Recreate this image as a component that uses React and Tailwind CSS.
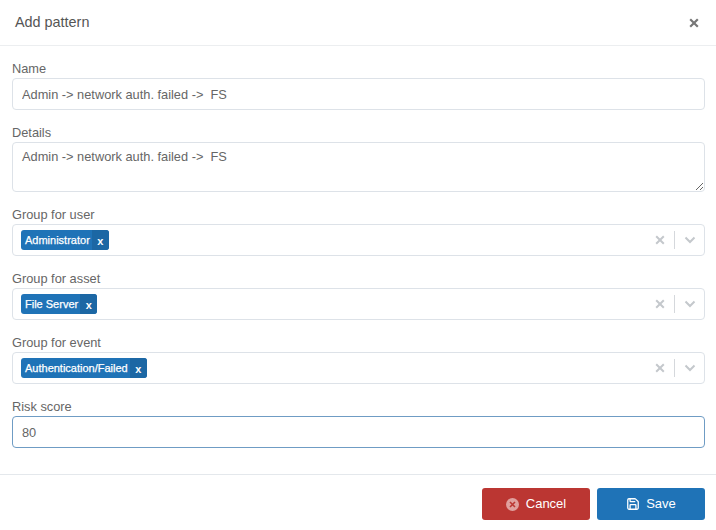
import React from "react";
import { Save } from "lucide-react";

const font = "font-['Liberation_Sans',Arial,sans-serif]";

function Field({ label, children }) {
  return (
    <div className="flex flex-col">
      <label className="h-[18px] text-[12.8px] leading-[18px] text-[#666]">{label}</label>
      {children}
    </div>
  );
}

function TagSelect({ label, tag }) {
  return (
    <Field label={label}>
      <div className="flex h-8 items-center rounded-[4px] border border-[#dde2e8] bg-white pl-2">
        <div className="flex h-5 items-stretch overflow-hidden rounded-[3px] bg-[#1f73b7] text-[11px] text-white">
          <span className="flex items-center pl-[4px] pr-[2px] [-webkit-text-stroke:0.25px_white]">{tag}</span>
          <span className="flex w-[17px] items-center justify-center bg-[#1c67a4] pt-[2px] text-[11px] font-bold">x</span>
        </div>
        <div className="ml-auto flex items-center">
          <svg width="10" height="10" viewBox="0 0 10 10" className="mr-[9px]">
            <path d="M1.2 1.2 L8.8 8.8 M8.8 1.2 L1.2 8.8" stroke="#c4c8cc" strokeWidth="2" fill="none" />
          </svg>
          <div className="h-[18px] w-px bg-[#d5d8dc]" />
          <svg width="12" height="8" viewBox="0 0 12 8" className="ml-[9px] mr-[8px]">
            <path d="M1.5 1.5 L6 6 L10.5 1.5" stroke="#c4c8cc" strokeWidth="2" fill="none" />
          </svg>
        </div>
      </div>
    </Field>
  );
}

export default function App() {
  const text = "Admin -> network auth. failed ->  FS";
  return (
    <div className={`h-[530px] w-[716px] overflow-hidden bg-white ${font}`}>
      <header className="flex h-[46px] items-center justify-between border-b border-[#eceef0] pl-[15px] pr-[17px]">
        <h2 className="text-[14.4px] text-[#555]">Add pattern</h2>
        <svg width="10" height="10" viewBox="0 0 10 10">
          <path d="M1.2 1.2 L8.8 8.8 M8.8 1.2 L1.2 8.8" stroke="#777" strokeWidth="2.2" fill="none" />
        </svg>
      </header>

      <div className="flex h-[429px] flex-col gap-[14px] border-b border-[#e4e8ec] pl-3 pr-[11px] pt-[14px]">
        <Field label="Name">
          <input
            readOnly
            value={text}
            className="h-8 rounded-[4px] border border-[#dde2e8] px-[9px] text-[12.8px] whitespace-pre text-[#666] outline-none"
          />
        </Field>
        <Field label="Details">
          <textarea
            readOnly
            value={text}
            className="block h-[50px] rounded-[4px] border border-[#dde2e8] px-[9px] py-[5px] text-[12.8px] leading-[18px] text-[#666] outline-none"
          />
        </Field>
        <TagSelect label="Group for user" tag="Administrator" />
        <TagSelect label="Group for asset" tag="File Server" />
        <TagSelect label="Group for event" tag="Authentication/Failed" />
        <Field label="Risk score">
          <input
            readOnly
            value="80"
            className="h-8 rounded-[4px] border border-[#6f9cc4] px-[9px] text-[12.8px] text-[#666] outline-none"
          />
        </Field>
      </div>

      <footer className="flex justify-end gap-[7px] pr-[11px] pt-[13px]">
        <button className="flex h-8 w-[108px] items-center justify-center gap-[7px] rounded-[3px] bg-[#bb3632] text-[13px] text-white">
          <span className="flex h-[13px] w-[13px] items-center justify-center rounded-full bg-[#e0a09e]">
            <svg width="7" height="7" viewBox="0 0 7 7">
              <path d="M1 1 L6 6 M6 1 L1 6" stroke="#bb3632" strokeWidth="1.6" fill="none" />
            </svg>
          </span>
          Cancel
        </button>
        <button className="flex h-8 w-[108px] items-center justify-center gap-[6px] rounded-[3px] bg-[#1f73b7] text-[13px] text-white">
          <Save size={14} strokeWidth={2.2} />
          Save
        </button>
      </footer>
    </div>
  );
}
